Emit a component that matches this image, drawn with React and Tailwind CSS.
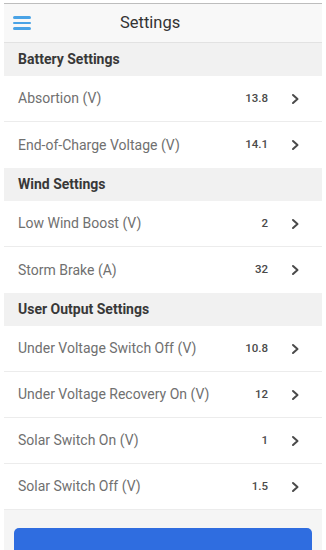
import React from "react";

const Chevron = () => (
  <svg width="10" height="12" viewBox="0 0 10 12" className="ml-[22px] shrink-0">
    <path d="M3 2 L7.5 6 L3 10" fill="none" stroke="#4a4a4a" strokeWidth="2" strokeLinecap="round" strokeLinejoin="round" />
  </svg>
);

const Section = ({ title }) => (
  <div className="h-[33px] shrink-0 flex items-center pl-[14px] bg-[#f1f1f1] text-[14px] font-bold text-[#383838]">
    {title}
  </div>
);

const Row = ({ label, value, last }) => (
  <div className={"h-[46px] shrink-0 flex items-center pl-[14px] pr-[22px] bg-white " + (last ? "" : "border-b border-[#ececec]")}>
    <div className="flex-1 text-[14px] text-[#707070]">{label}</div>
    <div className="text-[11.5px] font-medium text-[#4a4a4a]">{value}</div>
    <Chevron />
  </div>
);

export default function App() {
  return (
    <div className="w-[326px] h-[550px] bg-white overflow-hidden" style={{ fontFamily: "Roboto, 'Noto Sans', sans-serif" }}>
      <div className="mx-[4px] mt-[3px] h-[547px] flex flex-col bg-[#f5f5f5]">
        <div className="h-[40px] shrink-0 flex items-center border-t border-[#bdbdbd] border-b border-b-[#e2e2e2] bg-[#f8f8f8]">
          <div className="ml-[9px] w-[18px] flex flex-col gap-[3px]">
            <div className="h-[2.5px] bg-[#4aa3e6] rounded"></div>
            <div className="h-[2.5px] bg-[#4aa3e6] rounded"></div>
            <div className="h-[2.5px] bg-[#4aa3e6] rounded"></div>
          </div>
          <div className="ml-[89px] text-[16.5px] text-[#333]">Settings</div>
        </div>
        <Section title="Battery Settings" />
        <Row label="Absortion (V)" value="13.8" />
        <Row label="End-of-Charge Voltage (V)" value="14.1" last />
        <Section title="Wind Settings" />
        <Row label="Low Wind Boost (V)" value="2" />
        <Row label="Storm Brake (A)" value="32" last />
        <Section title="User Output Settings" />
        <Row label="Under Voltage Switch Off (V)" value="10.8" />
        <Row label="Under Voltage Recovery On (V)" value="12" />
        <Row label="Solar Switch On (V)" value="1" />
        <Row label="Solar Switch Off (V)" value="1.5" />
        <div className="flex-1 shrink-0 bg-[#f5f5f5] px-[10px] pt-[18px]">
          <div className="h-[40px] rounded-t-[5px] bg-[#2f6de0]"></div>
        </div>
      </div>
    </div>
  );
}
